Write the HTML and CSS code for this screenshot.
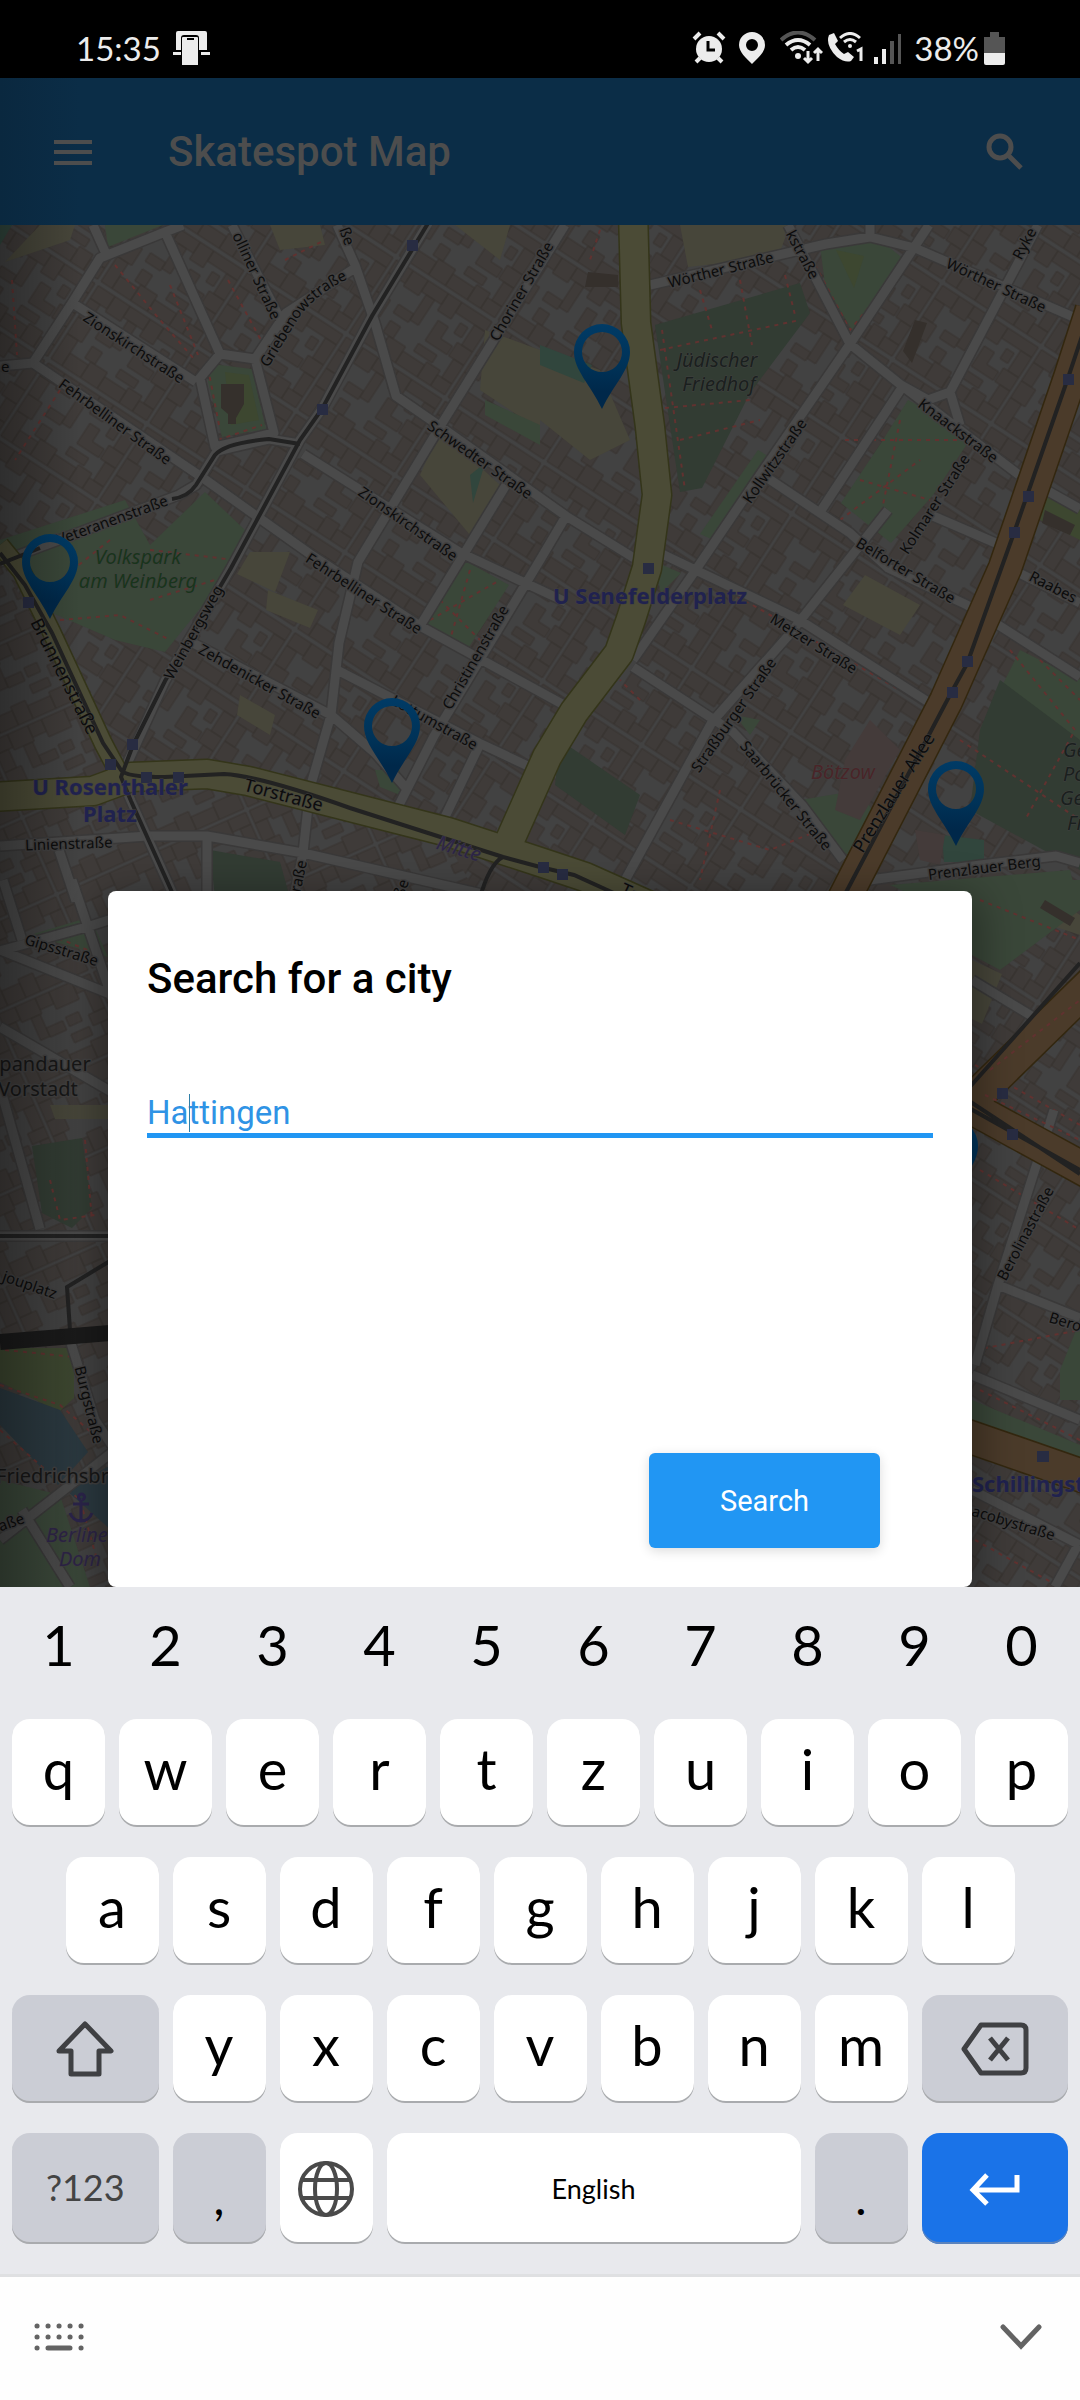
FILE: index.html
```html
<!DOCTYPE html>
<html lang="en">
<head>
<meta charset="utf-8">
<meta name="viewport" content="width=device-width, initial-scale=1">
<title>Skatespot Map</title>
<link rel="stylesheet" href="styles.css">
</head>
<body>
<div class="status">
  <span class="status-text">15:35</span>
  <svg class="cast" width="37" height="36" viewBox="0 0 37 36"><path d="M3 20V3q0-2 2-2h27q2 0 2 2v17h-8V8q0-3-3-3H11q-3 0-3 3v12zM0 22h8v3H0zM28 22h9v3h-9z"/><path d="M9 8q0-1 1-1h14q1 0 1 1v27H9z"/><path class="ink" d="M14 8h7v2h-7z"/></svg>
  <div class="status-right">
    <svg width="34" height="34" viewBox="0 0 34 34"><circle cx="17" cy="18" r="13"/><path class="line" d="M2 8l6-6M26 2l6 6M8 27l-4 4M26 27l4 4"/><path class="ink-line" d="M16 10v9h7"/></svg>
    <svg class="place" width="26" height="32" viewBox="0 0 26 32"><path fill-rule="evenodd" d="M13 0a13 13 0 0 1 13 13c0 7-7 13-13 19C7 26 0 20 0 13A13 13 0 0 1 13 0zm0 7a6 6 0 1 0 0 12 6 6 0 0 0 0-12z"/></svg>
    <svg class="wifi" width="43" height="34" viewBox="0 0 43 34"><path class="dim-line" d="M1 9q17-15 34 0"/><path class="line" d="M6 14q12-10 24 0M11 19q7-6 14 0"/><circle cx="18" cy="25" r="3"/><path class="thin" d="M28 20v11M24 27l4 4 4-4M38 30V18M34 22l4-4 4 4"/></svg>
    <svg class="call" width="38" height="32" viewBox="0 0 38 32"><path d="M2 3l5-2 4 8-3 3q4 7 9 10l4-2 6 5-3 4q-6 2-14-4Q-2 13 2 3z"/><path class="thin" d="M13 6q10-9 20 0M17 10q6-5 12 0"/><circle cx="23" cy="14" r="2"/><path class="thin" d="M30 19l4-2v12"/></svg>
    <svg class="signal" width="28" height="31" viewBox="0 0 28 31"><path d="M0 24h4v7H0zM8 16h4v15H8z"/><path class="dim" d="M16 8h4v23h-4zM24 1h3v30h-3z"/></svg>
    <span class="status-text percent">38%</span>
    <svg width="21" height="33" viewBox="0 0 21 33"><path class="dim" d="M6 0h9v5h6v16H0V5h6z"/><path d="M0 21h21v10q0 2-2 2H2q-2 0-2-2z"/></svg>
  </div>
</div>

<header class="appbar">
  <button class="icon-btn" aria-label="Menu"><svg width="38" height="28" viewBox="0 0 38 28"><path d="M0 2h38v4H0zM0 12h38v4H0zM0 23h38v4H0z"/></svg></button>
  <h1 class="appbar-title">Skatespot Map</h1>
  <button class="icon-btn" aria-label="Search"><svg width="38" height="38" viewBox="0 0 38 38"><circle class="glass" cx="14" cy="14" r="11"/><path class="glass" d="M23 23l12 12"/></svg></button>
</header>

<main class="stage">
  <svg class="map" viewBox="0 225 1080 1362" preserveAspectRatio="xMidYMid slice" role="img" aria-label="Map of Berlin Mitte">
    <defs>
      <pattern id="houses" width="118" height="92" patternUnits="userSpaceOnUse" patternTransform="rotate(33)">
        <rect class="land" width="118" height="92"/>
        <path class="house" d="M2 2h20v15H2zM22 2h18v18H22zM40 2h24v13H40zM64 2h16v20H64zM80 2h36v12H80zM2 17h12v22H2zM2 39h17v20H2zM2 59h13v30H2zM15 74h22v15H15zM37 70h20v19H37zM57 75h26v14H57zM83 71h16v18H83zM99 76h17v13H99zM103 14h13v24h-13zM98 38h18v16H98zM104 54h12v22h-12zM46 15h10v30H46zM28 38h18v10H28zM70 30h12v14h14v10H70zM30 56h12v14H30zM66 60h22v9H66zM90 20h9v12h-9z"/>
      </pattern>
      <pattern id="houses-left" width="104" height="84" patternUnits="userSpaceOnUse" patternTransform="rotate(-24)">
        <rect class="land" width="104" height="84"/>
        <path class="house" d="M2 2h18v14H2zM20 2h22v17H20zM42 2h15v13H42zM57 2h25v19H57zM82 2h20v13H82zM2 16h13v20H2zM2 36h18v16H2zM2 52h12v30H2zM14 66h20v16H14zM34 62h16v20H34zM50 68h25v14H50zM75 64h27v18H75zM90 15h12v24H90zM84 39h18v12H84zM92 51h10v13H92zM30 19h10v24H30zM40 34h18v10H40zM62 32h14v10H62zM60 50h20v9H60z"/>
      </pattern>
      <path id="streets" d="M0 366L33 363 72 303 100 258 165 232 183 225M93 225L107 256M165 232L220 354 255 359 274 433 215 447 200 378 220 354M74 304L196 382M33 363L203 478 262 520 310 554 420 626 564 705M255 359L286 313 355 268M232 225L286 330M337 225L355 265 375 323 396 396 441 427 566 516 634 558M303 454L461 553 566 602M565 225L441 425 358 562 339 643 331 715 310 788 303 853 293 901M506 485L420 626M566 516L540 560 434 736 399 805M337 670L479 743 530 767M193 643L331 715 375 753 406 788M479 746L444 819M0 846L148 836 207 836 303 853 482 894M59 850L76 901M207 836L207 901M650 285L826 244 870 237 915 248 1080 320M870 225V237M929 225L850 344 760 475 695 571 633 660M788 225L850 344 901 385 1019 475M1038 225L950 392 928 400 901 385M950 392L960 425M901 389L822 509M763 475L850 533 888 568 967 605 1080 677M1046 490L1080 509M933 516L998 544M660 553L798 619 933 705M888 510L788 636 712 722 623 884M633 667L733 732 802 805 843 860M870 880L980 865 1056 856 1080 863M1015 571L1080 603M0 951L90 926 115 918M3 880L22 940M72 880L112 998M0 950L115 996M0 1027L115 1094M0 1087L40 1229M0 1236H115M70 1340L95 1420 115 1450M22 1510L70 1587M0 1540L115 1450M972 980L1035 1018M1054 1110L998 1285 975 1365M998 1285L1080 1318M972 1490L1080 1545M1078 1545L1055 1587M972 1375L1080 1420"/>
      <path id="yellow-thin" d="M0 545L22 572 52 633 103 743 121 777"/>
      <path id="yellow-wide" d="M633 210L636 323 650 427 657 495 647 568 631 619 619 653 574 712 547 757 510 840M-10 797L93 791 131 777 207 774 248 781 448 832 540 862 585 877 670 915"/>
      <path id="orange" d="M1092 310L1070 378 1005 568 946 701 843 901 790 1010M1100 975L960 1112M950 1096L1100 1178M950 1430L1100 1482"/>
      <path id="griebenow" d="M268 368L300 316Q318 292 352 277"/>
    </defs>

    <rect x="0" y="225" width="1080" height="1362" fill="url(#houses)"/>
    <path fill="url(#houses-left)" d="M120 777L0 560V1587H110V900H480L440 830 250 785z"/>

    <g class="yard">
      <path d="M5 262L40 225H75L70 240zM270 225h50l5 20-45 5zM485 330l55 20v80l-60-40zM440 430l60 55-30 50-50-60zM455 225h55l-10 35zM540 350l60 20 30 70-40 20-50-40zM680 225h110l-12 32-90 10zM865 575l55 30-20 30-57-30zM250 552h40l-15 40-38-18zM268 590l50 20-8 18-44-18zM240 695l35 20-5 20-33-20zM50 1105h60v14H55zM1035 885l45 30v20l-60-20zM972 960l30 14-20 50-10-5z"/>
    </g>
    <g class="park">
      <path d="M105 225h58l-55 22zM212 364l40 5 14 60-44 8-14-55zM205 492L245 530 215 590 165 652 115 640 50 612 0 557V540L125 500 150 545zM820 245l60-5 25 20-50 75-30-50zM908 400l65 35-40 60-42 48-50-40 40-60zM758 450l20 12-60 80-18-8zM485 400l55 25v20l-55-30zM464 560l45 25-40 62-42-22zM375 770h25v25l-20-8zM1020 650l60 30v150l-40-60-60-40zM653 561l28 12-20 20zM735 715l25 5-10 15zM800 800l60-10 15 25-25 40-15-5zM0 888h10zM30 935l60-18 18 40zM0 1480l60 15 30 92H0zM972 880h108v30l-80 60-28-15zM1060 1370l20-50v80l-20 0zM972 1400l108 45v15l-108-40zM890 885l180-15 10 40-90 20z"/>
      <path class="grass" d="M0 1348h74v50l-15 14-59-30zM1034 480l46 25v35l-40-20zM836 250l28 6-10 32zM225 372l24 3 10 45-28 5z"/>
    </g>
    <g class="cemetery">
      <path d="M655 325l145-42 10 30-60 80-48 95-22 4zM1000 680l80 60v130l-110-60 10-80zM32 1146l50-8 10 70-20 20-30-15zM210 850l70 12 10 36h-75zM560 740l80 55-15 40-70-50z"/>
    </g>
    <path class="pitch" d="M540 345l52 20-8 18-44-18zM0 225h12l-12 20zM470 475l15-12-12 40zM942 835l42 5v22h-40z"/>
    <path class="water" d="M0 1388l60 22 28 42-30 33L0 1425zM66 1490l45-25v65z"/>
    <path class="industry" d="M845 760l25-40 30 30-40 70-25-10zM915 830l30 5-5 30-20-5z"/>
    <path class="landmark" d="M221 384h23v20l-8 14v6h-8v-10l-7-6zM915 320l12 3-15 40-9-12zM588 272l30 3v12h-33zM1045 510l30 15-5 10-28-12zM1045 900l30 18-5 8-30-18z"/>

    <path class="footway" d="M115 265L160 320 195 360M170 285L198 355M12 280l5 75M60 390L15 460M218 440L262 425M208 368l12 62M228 280L262 342M285 260L325 240M60 620L120 615 170 640M150 550L235 560 190 640M110 540L60 580M150 600L215 580M660 350L800 320M662 330L685 490M700 290L712 330M740 280L752 345M785 275L795 315M665 408L750 400M680 440L760 420M815 265L850 330 900 270M845 440L960 440M840 520L920 460M900 420L880 520M860 480L930 500M1010 650L1075 730 1025 820M1040 660L1080 700M960 740L1080 820M430 620L500 580M470 570L450 640M440 600L480 640M600 230L590 260M640 700L620 680M670 820L770 850 820 830M720 790L700 880M980 900L1080 940M975 1065L1080 1125M980 1170L1080 1230M975 1350L1080 1330M980 1390L1080 1440M975 1540L1060 1587M0 1385L60 1405 100 1440M0 1430L80 1500 100 1570M5 1350L75 1357M50 1180L60 1220 95 1215M85 1140L92 1220M50 935L100 955M675 560L900 690"/>

    <use href="#streets" class="street-edge"/>
    <path class="street-edge" d="M427 225L372 316 322 409 300 440 231 568 165 681 121 777 131 801 176 901M300 444L269 439 217 451 196 485 179 495 0 562"/>
    <use href="#streets" class="street"/>
    <path class="street" d="M430 220L372 316 322 409 300 440 231 568 165 681 121 777 131 801 176 901M300 444L269 439 217 451 196 485 179 495 0 562"/>
    <use href="#yellow-thin" class="yellow-edge thin-road"/>
    <use href="#yellow-wide" class="yellow-edge"/>
    <use href="#yellow-thin" class="yellow thin-road"/>
    <use href="#yellow-wide" class="yellow"/>
    <use href="#orange" class="orange-edge"/>
    <use href="#orange" class="orange"/>
    <path class="footway" d="M990 1070L1080 1000M985 1095L1080 1140"/>

    <path class="tram" d="M430 220L372 316 322 409 300 440 231 568 165 681 133 745 121 777 131 801 176 901M300 444L269 439Q225 443 215 455L196 485Q188 497 172 499M0 564L40 548M0 553L25 585 52 633 103 743 121 770Q125 777 165 777L224 774Q260 776 350 808L503 857 540 867 574 875 640 905M503 857Q489 864 479 901M1084 330L1068 378 1015 530 967 664 951 693 843 898M1080 963L960 1098M960 1103L1080 1170M960 1095L1080 1174M110 1261L67 1287 70 1330M0 1236H110"/>
    <path class="rail" d="M0 1342L110 1333"/>
    <g class="station"><path d="M407 240h11v11h-11zM317 404h11v11h-11zM23 597h11v11H23zM105 759h11v11h-11zM127 739h11v11h-11zM141 772h11v11h-11zM173 772h11v11h-11zM643 563h11v11h-11zM1063 374h11v11h-11zM1023 491h11v11h-11zM1009 527h11v11h-11zM962 656h11v11h-11zM947 687h11v11h-11zM538 862h11v11h-11zM557 869h11v11h-11zM997 1088h11v11h-11zM1007 1129h11v11h-11zM1037 1451h12v11h-12z"/></g>

    <g class="road-name">
      <text transform="translate(131 352) rotate(33)">Zionskirchstraße</text>
      <text transform="translate(112 426) rotate(36)">Fehrbelliner Straße</text>
      <text transform="translate(114 525) rotate(-20)">Veteranenstraße</text>
      <text class="start"><textPath href="#griebenow">Griebenowstraße</textPath></text>
      <text transform="translate(252 278) rotate(65)">olliner Straße</text>
      <text transform="translate(342 238) rotate(70)">ße</text>
      <text transform="translate(526 294) rotate(-60)">Choriner Straße</text>
      <text transform="translate(477 464) rotate(35)">Schwedter Straße</text>
      <text transform="translate(405 528) rotate(35)">Zionskirchstraße</text>
      <text transform="translate(361 598) rotate(33)">Fehrbelliner Straße</text>
      <text transform="translate(198 635) rotate(-61)">Weinbergsweg</text>
      <text transform="translate(257 686) rotate(29)">Zehdenicker Straße</text>
      <text transform="translate(432 727) rotate(29)">Lottumstraße</text>
      <text transform="translate(480 660) rotate(-60)">Christinenstraße</text>
      <text transform="translate(69 849) rotate(-2)">Linienstraße</text>
      <text transform="translate(303 880) rotate(-78)">traße</text>
      <text transform="translate(406 890) rotate(-70)">ße</text>
      <text transform="translate(722 275) rotate(-14)">Wörther Straße</text>
      <text transform="translate(798 257) rotate(62)">kstraße</text>
      <text transform="translate(1029 246) rotate(-62)">Ryke</text>
      <text transform="translate(994 290) rotate(25)">Wörther Straße</text>
      <text transform="translate(955 435) rotate(37)">Knaackstraße</text>
      <text transform="translate(779 464) rotate(-55)">Kollwitzstraße</text>
      <text transform="translate(939 507) rotate(-57)">Kolmarer Straße</text>
      <text transform="translate(903 575) rotate(31)">Belforter Straße</text>
      <text transform="translate(811 648) rotate(32)">Metzer Straße</text>
      <text transform="translate(738 718) rotate(-55)">Straßburger Straße</text>
      <text transform="translate(782 799) rotate(51)">Saarbrücker Straße</text>
      <text transform="translate(985 873) rotate(-7)">Prenzlauer Berg</text>
      <text class="start" transform="translate(1028 580) rotate(27)">Raabes</text>
      <text transform="translate(60 955) rotate(17)">Gipsstraße</text>
      <text transform="translate(28 1290) rotate(19)">jouplatz</text>
      <text transform="translate(84 1406) rotate(76)">Burgstraße</text>
      <text transform="translate(13 1527) rotate(-20)">aße</text>
      <text transform="translate(1030 1236) rotate(-62)">Berolinastraße</text>
      <text class="start" transform="translate(1048 1322) rotate(17)">Bero</text>
      <text transform="translate(1012 1528) rotate(17)">acobystraße</text>
      <text class="start" x="1" y="372">e</text>
    </g>
    <g class="road-name major">
      <text transform="translate(59 679) rotate(63)">Brunnenstraße</text>
      <text transform="translate(282 801) rotate(15)">Torstraße</text>
      <text class="start" transform="translate(619 894) rotate(25)">Tor</text>
      <text transform="translate(899 796) rotate(-58)">Prenzlauer Allee</text>
    </g>
    <g class="area">
      <text class="green" x="138" y="564">Volkspark</text><text class="green" x="138" y="588">am Weinberg</text>
      <text x="717" y="367">Jüdischer</text><text x="719" y="391">Friedhof</text>
      <text class="red" x="843" y="779">Bötzow</text>
      <text class="start" x="1063" y="757">Ge</text><text class="start" x="1063" y="781">Po</text><text class="start" x="1060" y="805">Ge</text><text class="start" x="1067" y="830">Fr</text>
      <text class="violet" transform="translate(457 855) rotate(17)">Mitte</text>
      <text class="violet start" x="46" y="1542">Berline</text><text class="violet" x="80" y="1566">Dom</text>
    </g>
    <g class="quarter"><text x="45" y="1071">pandauer</text><text x="38" y="1096">Vorstadt</text><text class="start" x="-4" y="1483">Friedrichsbr</text></g>
    <g class="ubahn"><text x="110" y="795">U Rosenthaler</text><text x="110" y="822">Platz</text><text x="650" y="604">U Senefelderplatz</text><text class="start" x="972" y="1492">Schillingst</text></g>
    <path class="anchor" d="M81 1500v21M73 1504h16M70 1513q3 8 11 8t11-8M81 1500a3 3 0 1 1 1 0"/>

    <defs>
      <g id="pin"><path class="pin-body" fill-rule="evenodd" d="M0-28A28 28 0 0 1 28 0C28 18 12 32 0 57C-12 32-28 18-28 0A28 28 0 0 1 0-28zM0-20A20 20 0 1 0 0 20A20 20 0 1 0 0-20z"/></g>
      <linearGradient id="pin-blue" x1="0" y1="0" x2="0" y2="1"><stop offset="0" stop-color="#003b66"/><stop offset="0.5" stop-color="#003257"/><stop offset="0.8" stop-color="#00284a"/></linearGradient>
      <linearGradient id="edge" x1="0" y1="0" x2="1" y2="0"><stop offset="0" stop-color="#000" stop-opacity="0.3"/><stop offset="1" stop-color="#000" stop-opacity="0"/></linearGradient>
    </defs>
    <use href="#pin" x="602" y="352"/><use href="#pin" x="50" y="562"/><use href="#pin" x="392" y="726"/><use href="#pin" x="956" y="789"/><use href="#pin" x="950" y="1146"/>
    <rect x="0" y="225" width="80" height="1362" fill="url(#edge)"/>
  </svg>

  <form class="dialog">
    <h2 class="dialog-title"><label for="city">Search for a city</label></h2>
    <div class="field"><input class="field-input" id="city" type="text" value="Hattingen"><span class="caret"></span></div>
    <button class="submit" type="button">Search</button>
  </form>
</main>

<section class="keyboard" aria-label="Keyboard">
  <div class="row digits"><button class="key">1</button><button class="key">2</button><button class="key">3</button><button class="key">4</button><button class="key">5</button><button class="key">6</button><button class="key">7</button><button class="key">8</button><button class="key">9</button><button class="key">0</button></div>
  <div class="row"><button class="key">q</button><button class="key">w</button><button class="key">e</button><button class="key">r</button><button class="key">t</button><button class="key">z</button><button class="key">u</button><button class="key">i</button><button class="key">o</button><button class="key">p</button></div>
  <div class="row"><button class="key">a</button><button class="key">s</button><button class="key">d</button><button class="key">f</button><button class="key">g</button><button class="key">h</button><button class="key">j</button><button class="key">k</button><button class="key">l</button></div>
  <div class="row">
    <button class="key wide gray" aria-label="Shift"><svg width="62" height="60" viewBox="0 0 62 60"><path class="key-line" d="M31 5L57 32H45V55H17V32H5z"/></svg></button>
    <button class="key">y</button><button class="key">x</button><button class="key">c</button><button class="key">v</button><button class="key">b</button><button class="key">n</button><button class="key">m</button>
    <button class="key wide gray" aria-label="Backspace"><svg width="68" height="54" viewBox="0 0 68 54"><path class="key-line" d="M20 3H60Q65 3 65 8V46Q65 51 60 51H20L3 27z"/><path class="key-line" d="M29 16L47 38M47 16L29 38"/></svg></button>
  </div>
  <div class="row last">
    <button class="key wide gray symbols">?123</button>
    <button class="key gray low">,</button>
    <button class="key icon-key" aria-label="Language"><svg width="58" height="58" viewBox="0 0 58 58"><g class="globe"><circle cx="29" cy="29" r="26"/><ellipse cx="29" cy="29" rx="11" ry="26"/><path d="M5 20H53M5 38H53"/></g></svg></button>
    <button class="key space">English</button>
    <button class="key gray low">.</button>
    <button class="key wide enter" aria-label="Enter"><svg width="52" height="34" viewBox="0 0 52 34"><path class="enter-line" d="M48 3V18H4M18 3L4 18L18 32"/></svg></button>
  </div>
</section>

<nav class="navbar">
  <button class="icon-btn" aria-label="Switch keyboard"><svg width="50" height="28" viewBox="0 0 50 28"><path class="dots" d="M3 3h.1M14 3h.1M25 3h.1M36 3h.1M47 3h.1M3 14h.1M14 14h.1M25 14h.1M36 14h.1M47 14h.1M3 25h.1M14 25H36M47 25h.1"/></svg></button>
  <button class="icon-btn" aria-label="Hide keyboard"><svg width="42" height="26" viewBox="0 0 42 26"><path class="chevron" d="M3 3L21 22L39 3"/></svg></button>
</nav>
</body>
</html>
```
FILE: styles.css
```css
* { box-sizing: border-box; }

body {
  margin: 0;
  min-height: 100vh;
  display: flex;
  flex-direction: column;
  font-family: Roboto, sans-serif;
  background: #fefefe;
}

h1, h2 { margin: 0; font-weight: 500; }
svg { display: block; }

button {
  display: flex;
  align-items: center;
  justify-content: center;
  margin: 0;
  padding: 0;
  border: 0;
  background: none;
  color: inherit;
  font: inherit;
}

/* status bar */
.status {
  display: flex;
  align-items: center;
  height: 78px;
  padding: 18px 75px 0 76px;
  background: #000;
  color: #ececec;
  fill: #ececec;
}
.status-text {
  font-family: Lato, sans-serif;
  font-size: 33px;
  line-height: 40px;
}
.cast { margin-left: 12px; }
.status-right { display: flex; align-items: center; margin-left: auto; }
.place { margin-left: 13px; }
.wifi { margin-left: 15px; }
.call { margin-left: 4px; }
.signal { margin-left: 9px; }
.percent { margin: 0 5px 0 12px; }
.ink { fill: #000; }
.line, .thin, .dim-line, .ink-line { fill: none; stroke: #ececec; stroke-width: 4; }
.thin { stroke-width: 3; }
.ink-line { stroke: #000; stroke-width: 3; }
.dim-line { stroke: #555; }
.dim { fill: #555; }

/* app bar */
.appbar {
  display: flex;
  align-items: center;
  height: 147px;
  padding: 0 56px 0 54px;
  background: linear-gradient(90deg, #0a283f, #0b2d47 80px);
  color: #4d4d4d;
  fill: #4d4d4d;
}
.appbar-title { flex: 1; margin-left: 76px; font-size: 42px; line-height: 48px; }
.glass { fill: none; stroke: #4d4d4d; stroke-width: 5; }

/* map */
.stage {
  position: relative;
  flex: 1;
  display: flex;
  align-items: flex-end;
  justify-content: center;
  overflow: hidden;
  padding-top: 225px;
}
.map { position: absolute; inset: 0; width: 100%; height: 100%; background: #424242; }
.land { fill: #424242; }
.house { fill: #3f3b39; stroke: #37322f; stroke-width: 1; }
.yard { fill: #47463a; }
.park { fill: #3a4739; }
.grass { fill: #3d4730; }
.cemetery { fill: #323c33; }
.pitch { fill: #31463d; }
.water { fill: #2b3940; }
.industry { fill: #443b3a; }
.landmark { fill: #35302c; }
.footway { fill: none; stroke: #613230; stroke-width: 2; stroke-dasharray: 4 5; }
.street-edge, .street { fill: none; stroke-linejoin: round; }
.street-edge { stroke: #3a3939; stroke-width: 12; }
.street { stroke: #4a4a4a; stroke-width: 9; }
.yellow-edge, .yellow, .orange-edge, .orange { fill: none; stroke-linejoin: round; }
.yellow-edge { stroke: #34351a; stroke-width: 31; }
.yellow { stroke: #4b4b36; stroke-width: 28; }
.yellow-edge.thin-road { stroke-width: 20; }
.yellow.thin-road { stroke-width: 17; }
.orange-edge { stroke: #33270f; stroke-width: 35; }
.orange { stroke: #4b3b2a; stroke-width: 32; }
.tram { fill: none; stroke: #222; stroke-width: 4; }
.rail { fill: none; stroke: #1a1a1a; stroke-width: 16; }
.station { fill: #282c42; }
.anchor { fill: none; stroke: #2b244a; stroke-width: 3; }
.pin-body { fill: url(#pin-blue); }

.map text {
  font-family: "Noto Sans", sans-serif;
  text-anchor: middle;
  paint-order: stroke;
  stroke: #414040;
  stroke-width: 3px;
  stroke-linejoin: round;
}
.map .start { text-anchor: start; }
.road-name { fill: #0c0c0c; font-size: 15px; }
.major { font-size: 18px; }
.map .major text, .map .area text, .map .ubahn text { stroke-width: 1px; }
.area { fill: #1a201e; font-size: 20px; font-style: italic; }
.green { fill: #18351b; }
.red { fill: #4a2528; }
.violet { fill: #2d2547; }
.quarter { fill: #171717; font-size: 20px; }
.ubahn { fill: #20224f; font-size: 22px; font-weight: 700; }

/* dialog */
.dialog {
  position: relative;
  width: 80%;
  padding: 63px 39px 39px;
  border-radius: 8px;
  background: #fff;
  box-shadow: 0 12px 40px 8px rgba(0, 0, 0, 0.35);
}
.dialog-title { font-size: 42px; line-height: 50px; color: #000; }
.field { position: relative; margin-top: 84px; }
.field-input {
  display: block;
  width: 100%;
  height: 50px;
  padding: 3px 0 0;
  border: 0;
  border-bottom: 5px solid #2196f3;
  background: none;
  color: #2f93e5;
  font: 33px/42px Roboto, sans-serif;
  outline: 0;
}
.caret { position: absolute; left: 42px; top: 6px; width: 1px; height: 38px; background: #2f7fa8; }
.submit {
  width: 231px;
  height: 95px;
  margin: 315px 53px 0 auto;
  border-radius: 6px;
  background: #2196f3;
  color: #fff;
  font-size: 29px;
  box-shadow: 0 3px 12px rgba(0, 0, 0, 0.14);
}

/* keyboard */
.keyboard {
  position: relative;
  display: flex;
  flex-direction: column;
  gap: 30px;
  padding: 12px 12px 30px;
  background: #e8e9ed;
  color: #000;
  font-family: Lato, sans-serif;
  font-size: 56px;
}
.row { display: flex; justify-content: center; gap: 14px; height: 108px; }
.digits { height: 90px; }
.last { height: 111px; }
.key {
  flex: 0 0 calc((100% - 126px) / 10);
  padding-bottom: 10px;
  border-radius: 18px;
  background: #fff;
  box-shadow: inset 0 -2px 0 #a9abae;
}
.digits .key { padding: 0; background: none; box-shadow: none; }
.wide { flex-basis: calc((100% - 126px) * 0.15 + 7px); padding-bottom: 0; }
.icon-key { padding-bottom: 0; }
.gray { background: #cbcdd5; }
.symbols { padding-bottom: 4px; color: #444; font-size: 36px; }
.low { padding: 16px 0 0; font-size: 48px; }
.space { flex: 1; padding: 0; font-size: 27px; }
.enter { background: #1a73e8; box-shadow: inset 0 -2px 0 #5b83bd; }
.key-line { fill: none; stroke: #3f4043; stroke-width: 5; stroke-linejoin: round; }
.globe { fill: none; stroke: #4a4a4a; stroke-width: 4; }
.enter-line { fill: none; stroke: #fff; stroke-width: 5; }

/* bottom bar */
.navbar {
  display: flex;
  align-items: center;
  justify-content: space-between;
  height: 126px;
  padding: 0 38px 4px 34px;
  border-top: 3px solid #dfe0e2;
}
.dots, .chevron { fill: none; stroke: #636363; stroke-width: 5; stroke-linecap: round; }
```
